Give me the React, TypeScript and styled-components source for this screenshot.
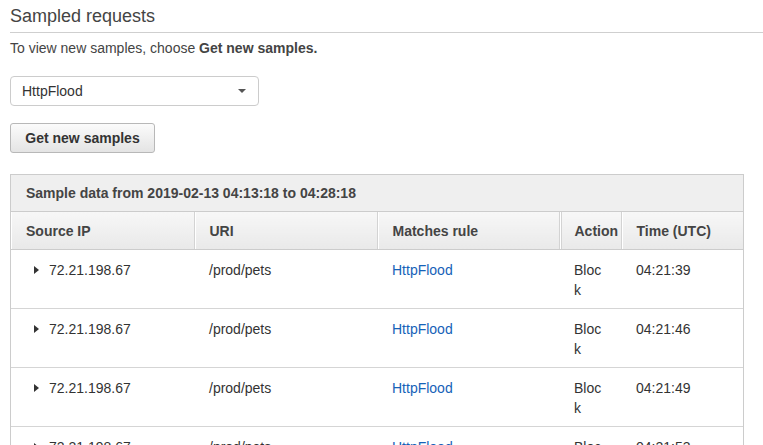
import * as React from 'react';
import styled, { createGlobalStyle } from 'styled-components';

const GlobalStyle = createGlobalStyle`
    html, body {
        margin: 0;
        padding: 0;
        overflow: hidden;
        background: #fff;
    }
    body {
        font-family: "Liberation Sans", Arial, Helvetica, sans-serif;
        color: #444;
    }
`;

const Page = styled.div`
    padding: 5px 21px 0 10px;
`;

const Title = styled.h2`
    margin: 0 -21px 0 0;
    padding: 0 0 5px;
    font-size: 18px;
    font-weight: normal;
    line-height: 22px;
    color: #444;
    border-bottom: 1px solid #cfcfcf;
`;

const Hint = styled.p`
    margin: 6px 0 0;
    font-size: 14px;
    line-height: 19px;
    color: #444;
    b {
        font-weight: bold;
    }
`;

const SelectBox = styled.div`
    margin-top: 18px;
    width: 249px;
    height: 30px;
    box-sizing: border-box;
    border: 1px solid #ccc;
    border-radius: 4px;
    display: flex;
    align-items: center;
    justify-content: space-between;
    padding: 0 10px 0 11px;
    font-size: 14px;
    color: #333;
    background: #fff;
`;

const Caret = styled.span`
    width: 0;
    height: 0;
    border-left: 4px solid transparent;
    border-right: 4px solid transparent;
    border-top: 4px solid #555;
    margin-right: 2px;
`;

const Button = styled.button`
    display: block;
    margin-top: 17px;
    height: 30px;
    width: 145px;
    box-sizing: border-box;
    border: 1px solid #b8b8b8;
    border-radius: 3px;
    background: linear-gradient(#fbfbfb, #e4e4e4);
    font-family: inherit;
    font-size: 14px;
    font-weight: bold;
    color: #333;
    padding: 0;
`;

const TableBox = styled.div`
    margin-top: 21px;
    width: 732px;
    border: 1px solid #ccc;
    border-bottom: none;
`;

const Caption = styled.div`
    height: 37px;
    box-sizing: border-box;
    background: #efefef;
    border-bottom: 1px solid #ccc;
    padding: 0 15px;
    display: flex;
    align-items: center;
    font-size: 14px;
    font-weight: bold;
    color: #444;
`;

const Table = styled.table`
    width: 100%;
    border-collapse: collapse;
    table-layout: fixed;
`;

const HeadCell = styled.th<{ $double?: boolean }>`
    height: 37px;
    padding: 0 15px;
    text-align: left;
    font-size: 14px;
    font-weight: bold;
    color: #444;
    white-space: nowrap;
    overflow: hidden;
    background: linear-gradient(#f7f7f7, #e9e9e9);
    border-bottom: 1px solid #ccc;
    border-right: 1px solid #d3d3d3;
    box-shadow: inset 1px 0 0 #fff${props => (props.$double ? ', inset 2px 0 0 #d3d3d3' : '')};
    &:last-child {
        border-right: none;
    }
`;

const Row = styled.tr`
    border-bottom: 1px solid #d5d5d5;
`;

const Cell = styled.td`
    vertical-align: top;
    padding: 10px 15px 8px;
    font-size: 14px;
    line-height: 20px;
    color: #333;
    word-break: break-all;
`;

const IpCell = styled(Cell)`
    padding-left: 23px;
`;

const Expander = styled.span`
    display: inline-block;
    width: 0;
    height: 0;
    border-top: 4px solid transparent;
    border-bottom: 4px solid transparent;
    border-left: 5px solid #333;
    margin-right: 10px;
    vertical-align: 1px;
`;

const RuleLink = styled.a`
    color: #1662b8;
    text-decoration: none;
`;

const samples = ['04:21:39', '04:21:46', '04:21:49', '04:21:53'];

const App = () => (
    <>
        <GlobalStyle />
        <Page>
            <Title>Sampled requests</Title>
            <Hint>
                To view new samples, choose <b>Get new samples.</b>
            </Hint>
            <SelectBox>
                HttpFlood
                <Caret />
            </SelectBox>
            <Button>Get new samples</Button>
            <TableBox>
                <Caption>Sample data from 2019-02-13 04:13:18 to 04:28:18</Caption>
                <Table>
                    <colgroup>
                        <col style={{ width: 183 }} />
                        <col style={{ width: 183 }} />
                        <col style={{ width: 182 }} />
                        <col style={{ width: 62 }} />
                        <col />
                    </colgroup>
                    <thead>
                        <tr>
                            <HeadCell>Source IP</HeadCell>
                            <HeadCell>URI</HeadCell>
                            <HeadCell>Matches rule</HeadCell>
                            <HeadCell $double>Action</HeadCell>
                            <HeadCell>Time (UTC)</HeadCell>
                        </tr>
                    </thead>
                    <tbody>
                        {samples.map(time => (
                            <Row key={time}>
                                <IpCell>
                                    <Expander />
                                    72.21.198.67
                                </IpCell>
                                <Cell>/prod/pets</Cell>
                                <Cell>
                                    <RuleLink href="#">HttpFlood</RuleLink>
                                </Cell>
                                <Cell>Block</Cell>
                                <Cell>{time}</Cell>
                            </Row>
                        ))}
                    </tbody>
                </Table>
            </TableBox>
        </Page>
    </>
);

export default App;
